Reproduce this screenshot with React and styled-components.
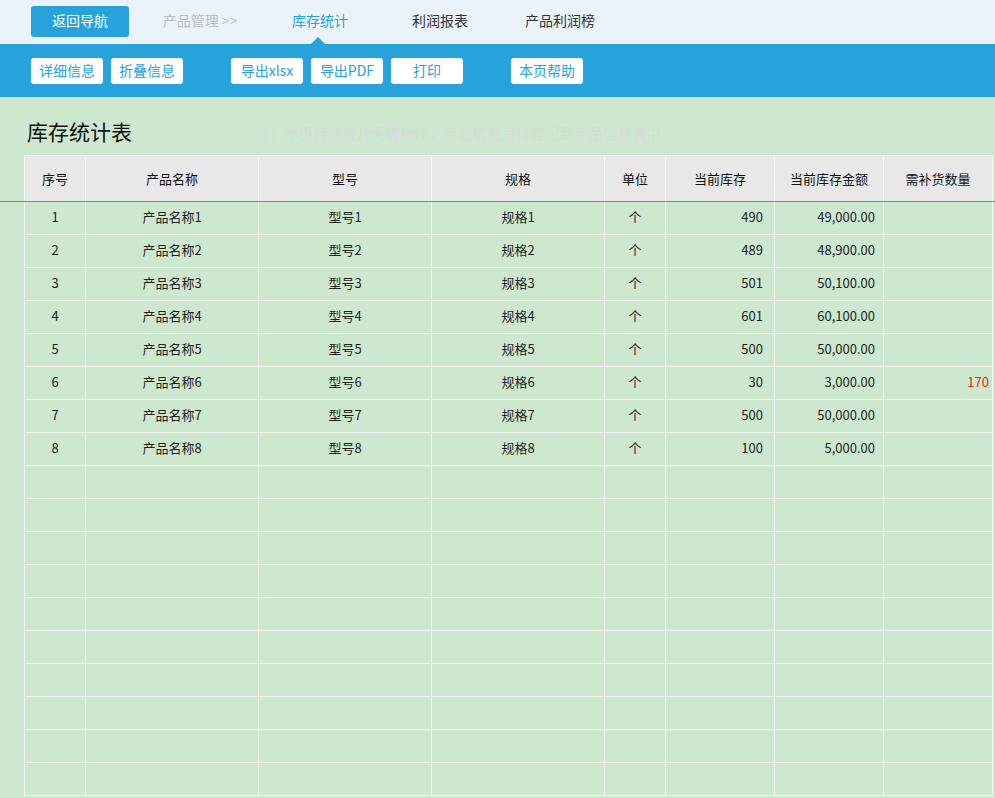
import React from 'react'
import styled, { createGlobalStyle } from 'styled-components'

const GlobalStyle = createGlobalStyle`
  html, body {
    margin: 0;
    padding: 0;
    background: #cde8cf;
    font-family: "Noto Sans CJK SC", "Noto Sans", "Liberation Sans", sans-serif;
  }
`

const rows = [
  { name: '产品名称1', model: '型号1', spec: '规格1', stock: 490, amount: '49,000.00', need: '' },
  { name: '产品名称2', model: '型号2', spec: '规格2', stock: 489, amount: '48,900.00', need: '' },
  { name: '产品名称3', model: '型号3', spec: '规格3', stock: 501, amount: '50,100.00', need: '' },
  { name: '产品名称4', model: '型号4', spec: '规格4', stock: 601, amount: '60,100.00', need: '' },
  { name: '产品名称5', model: '型号5', spec: '规格5', stock: 500, amount: '50,000.00', need: '' },
  { name: '产品名称6', model: '型号6', spec: '规格6', stock: 30, amount: '3,000.00', need: 170 },
  { name: '产品名称7', model: '型号7', spec: '规格7', stock: 500, amount: '50,000.00', need: '' },
  { name: '产品名称8', model: '型号8', spec: '规格8', stock: 100, amount: '5,000.00', need: '' },
]

const columns = [
  { title: '序号', width: 61 },
  { title: '产品名称', width: 173 },
  { title: '型号', width: 173 },
  { title: '规格', width: 173 },
  { title: '单位', width: 61 },
  { title: '当前库存', width: 109 },
  { title: '当前库存金额', width: 109 },
  { title: '需补货数量', width: 109 },
]

const App = () => {
  const empty = Array.from({ length: 10 })
  return (
    <Page>
      <GlobalStyle />
      <NavBar>
        <BackButton>返回导航</BackButton>
        <NavItem $muted>产品管理 &gt;&gt;</NavItem>
        <NavItem $active>库存统计</NavItem>
        <NavItem>利润报表</NavItem>
        <NavItem>产品利润榜</NavItem>
      </NavBar>
      <ToolBar>
        <ToolGroup>
          <ToolButton>详细信息</ToolButton>
          <ToolButton>折叠信息</ToolButton>
        </ToolGroup>
        <ToolGroup>
          <ToolButton>导出xlsx</ToolButton>
          <ToolButton>导出PDF</ToolButton>
          <ToolButton>打印</ToolButton>
        </ToolGroup>
        <ToolGroup>
          <ToolButton>本页帮助</ToolButton>
        </ToolGroup>
      </ToolBar>
      <TitleRow>
        <Title>库存统计表</Title>
        <Note>注：本页自动统计无需操作，产品信息资料登记到产品信息表中</Note>
      </TitleRow>
      <TableWrap>
        <Table>
          <colgroup>
            {columns.map((c) => (
              <col key={c.title} style={{ width: c.width }} />
            ))}
          </colgroup>
          <thead>
            <tr>
              {columns.map((c) => (
                <Th key={c.title}>{c.title}</Th>
              ))}
            </tr>
          </thead>
          <tbody>
            {rows.map((r, i) => (
              <tr key={i}>
                <Td>{i + 1}</Td>
                <Td>{r.name}</Td>
                <Td>{r.model}</Td>
                <Td>{r.spec}</Td>
                <Td>个</Td>
                <Td $right="11px">{r.stock}</Td>
                <Td $right="8px">{r.amount}</Td>
                <Td $right="3px" $red>{r.need}</Td>
              </tr>
            ))}
            {empty.map((_, i) => (
              <tr key={'e' + i}>
                {columns.map((c) => (
                  <Td key={c.title} />
                ))}
              </tr>
            ))}
          </tbody>
        </Table>
      </TableWrap>
    </Page>
  )
}

export default App

const Page = styled.div`
  width: 995px;
  height: 798px;
  overflow: hidden;
  background: #cde8cf;
`

const NavBar = styled.div`
  height: 44px;
  background: #eaf2fa;
  display: flex;
  align-items: flex-start;
  padding-left: 31px;
  box-sizing: border-box;
`

const BackButton = styled.div`
  margin-top: 6px;
  width: 98px;
  height: 31px;
  padding-bottom: 3px;
  box-sizing: border-box;
  border-radius: 3px;
  background: #27a2da;
  color: #fff;
  font-size: 14px;
  display: flex;
  align-items: center;
  justify-content: center;
  margin-right: 11px;
`

const NavItem = styled.div`
  position: relative;
  width: 120px;
  height: 44px;
  display: flex;
  align-items: center;
  justify-content: center;
  font-size: 14px;
  padding-bottom: 5px;
  box-sizing: border-box;
  color: ${(p) => (p.$active ? '#27a2da' : p.$muted ? '#b9bec4' : '#333')};

  ${(p) =>
    p.$active &&
    `
    &::after {
      content: '';
      position: absolute;
      left: 51px;
      bottom: 0;
      border-left: 7px solid transparent;
      border-right: 7px solid transparent;
      border-bottom: 7px solid #27a2da;
    }
  `}
`

const ToolBar = styled.div`
  height: 53px;
  background: #27a2da;
  display: flex;
  align-items: center;
  padding-left: 31px;
  gap: 48px;
  box-sizing: border-box;
`

const ToolGroup = styled.div`
  display: flex;
  gap: 8px;
`

const ToolButton = styled.div`
  width: 72px;
  height: 26px;
  padding-bottom: 2px;
  box-sizing: border-box;
  background: #fff;
  border-radius: 3px;
  color: #27a2da;
  font-size: 14px;
  display: flex;
  align-items: center;
  justify-content: center;
`

const TitleRow = styled.div`
  height: 58px;
  display: flex;
  align-items: center;
  padding: 10px 0 0 27px;
  box-sizing: border-box;
`

const Title = styled.div`
  font-size: 21px;
  color: #111;
  width: 228px;
  flex-shrink: 0;
`

const Note = styled.div`
  font-size: 14.5px;
  color: #d3dcd8;
  margin-top: 2px;
`

const TableWrap = styled.div`
  position: relative;
  margin-left: 24px;
  width: 968px;

  &::after {
    content: '';
    position: absolute;
    top: 46px;
    left: -24px;
    width: 995px;
    height: 1px;
    background: #3fa97a;
  }
`

const Table = styled.table`
  width: 968px;
  border-collapse: collapse;
  table-layout: fixed;
  font-size: 13px;
`

const Th = styled.th`
  height: 44px;
  padding: 0 0 2px;
  background: #e8e8e8;
  font-weight: normal;
  color: #111;
  border: 1px solid #f7f7f7;
  border-bottom: none;
  text-align: center;
`

const Td = styled.td`
  height: 29px;
  padding: 0 ${(p) => p.$right || '0'} 3px 0;
  border: 1px solid #f1f6f1;
  border-top: none;
  color: ${(p) => (p.$red ? '#e8241c' : '#1f1f1f')};
  text-align: ${(p) => (p.$right ? 'right' : 'center')};
  white-space: nowrap;
`
